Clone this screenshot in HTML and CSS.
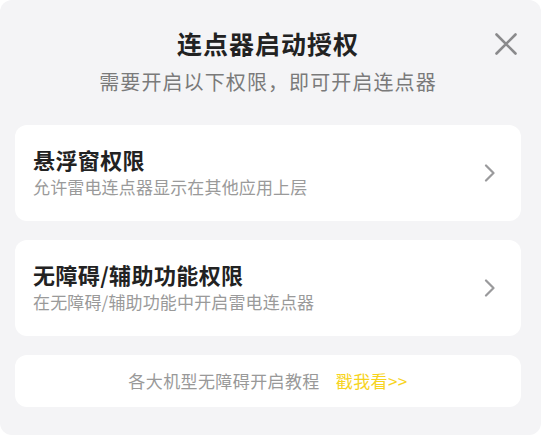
FILE: index.html
```html
<!DOCTYPE html>
<html lang="zh-CN">

<head>
  <meta charset="UTF-8">
  <title>连点器启动授权</title>
  <link rel="stylesheet" href="styles.css">
</head>

<body>
  <div class="panel">
    <button class="cerrar" aria-label="关闭">
      <svg width="22" height="22" viewBox="0 0 22 22">
        <path d="M1.5 1.5 L20.5 20.5 M20.5 1.5 L1.5 20.5" stroke="#8a8a8c" stroke-width="2.6" stroke-linecap="round" fill="none" />
      </svg>
    </button>

    <h1>连点器启动授权</h1>
    <p class="subtitulo">需要开启以下权限，即可开启连点器</p>

    <div class="permiso">
      <div class="texto">
        <div class="nombre">悬浮窗权限</div>
        <div class="detalle">允许雷电连点器显示在其他应用上层</div>
      </div>
      <svg class="flecha" width="12" height="18" viewBox="0 0 12 18">
        <path d="M2 1.5 L9.5 9 L2 16.5" stroke="#9a9a9c" stroke-width="2.2" stroke-linecap="round" stroke-linejoin="round" fill="none" />
      </svg>
    </div>

    <div class="permiso">
      <div class="texto">
        <div class="nombre">无障碍/辅助功能权限</div>
        <div class="detalle">在无障碍/辅助功能中开启雷电连点器</div>
      </div>
      <svg class="flecha" width="12" height="18" viewBox="0 0 12 18">
        <path d="M2 1.5 L9.5 9 L2 16.5" stroke="#9a9a9c" stroke-width="2.2" stroke-linecap="round" stroke-linejoin="round" fill="none" />
      </svg>
    </div>

    <div class="tutorial">
      各大机型无障碍开启教程<a class="enlace" href="#">戳我看&gt;&gt;</a>
    </div>
  </div>
</body>

</html>
```

FILE: styles.css
```css
body {
  margin: 0;
  background-color: #fff;
  font-family: "Noto Sans CJK SC", "Noto Sans", sans-serif;
}

.panel {
  position: relative;
  box-sizing: border-box;
  width: 541px;
  height: 435px;
  padding: 28px 20px 0 15px;
  background-color: #f4f4f6;
  border-radius: 12px;
  text-align: center;
}

.cerrar {
  position: absolute;
  top: 33px;
  right: 24px;
  width: 22px;
  height: 22px;
  padding: 0;
  border: none;
  background: none;
  cursor: pointer;
}

.cerrar svg {
  display: block;
}

h1 {
  margin: 0;
  font-size: 25px;
  line-height: 30px;
  font-weight: bold;
  color: #222;
  letter-spacing: 1px;
}

.subtitulo {
  margin: 10px 0 29px;
  font-size: 20px;
  line-height: 28px;
  color: #7a7a7a;
  letter-spacing: 1.1px;
}

.permiso {
  display: flex;
  align-items: center;
  justify-content: space-between;
  height: 96px;
  box-sizing: border-box;
  padding: 20px 25px 20px 18px;
  margin-bottom: 19px;
  background-color: #fff;
  border-radius: 12px;
  text-align: left;
}

.nombre {
  font-size: 22px;
  line-height: 28px;
  font-weight: bold;
  color: #222;
  letter-spacing: 0.4px;
}

.detalle {
  font-size: 17px;
  line-height: 28px;
  color: #9a9a9a;
  letter-spacing: 0.15px;
}

.flecha {
  flex-shrink: 0;
}

.tutorial {
  height: 52px;
  line-height: 52px;
  background-color: #fff;
  border-radius: 12px;
  font-size: 17px;
  color: #999;
  letter-spacing: 0.4px;
}

.enlace {
  margin-left: 16px;
  color: #f7d41e;
  text-decoration: none;
}
```
